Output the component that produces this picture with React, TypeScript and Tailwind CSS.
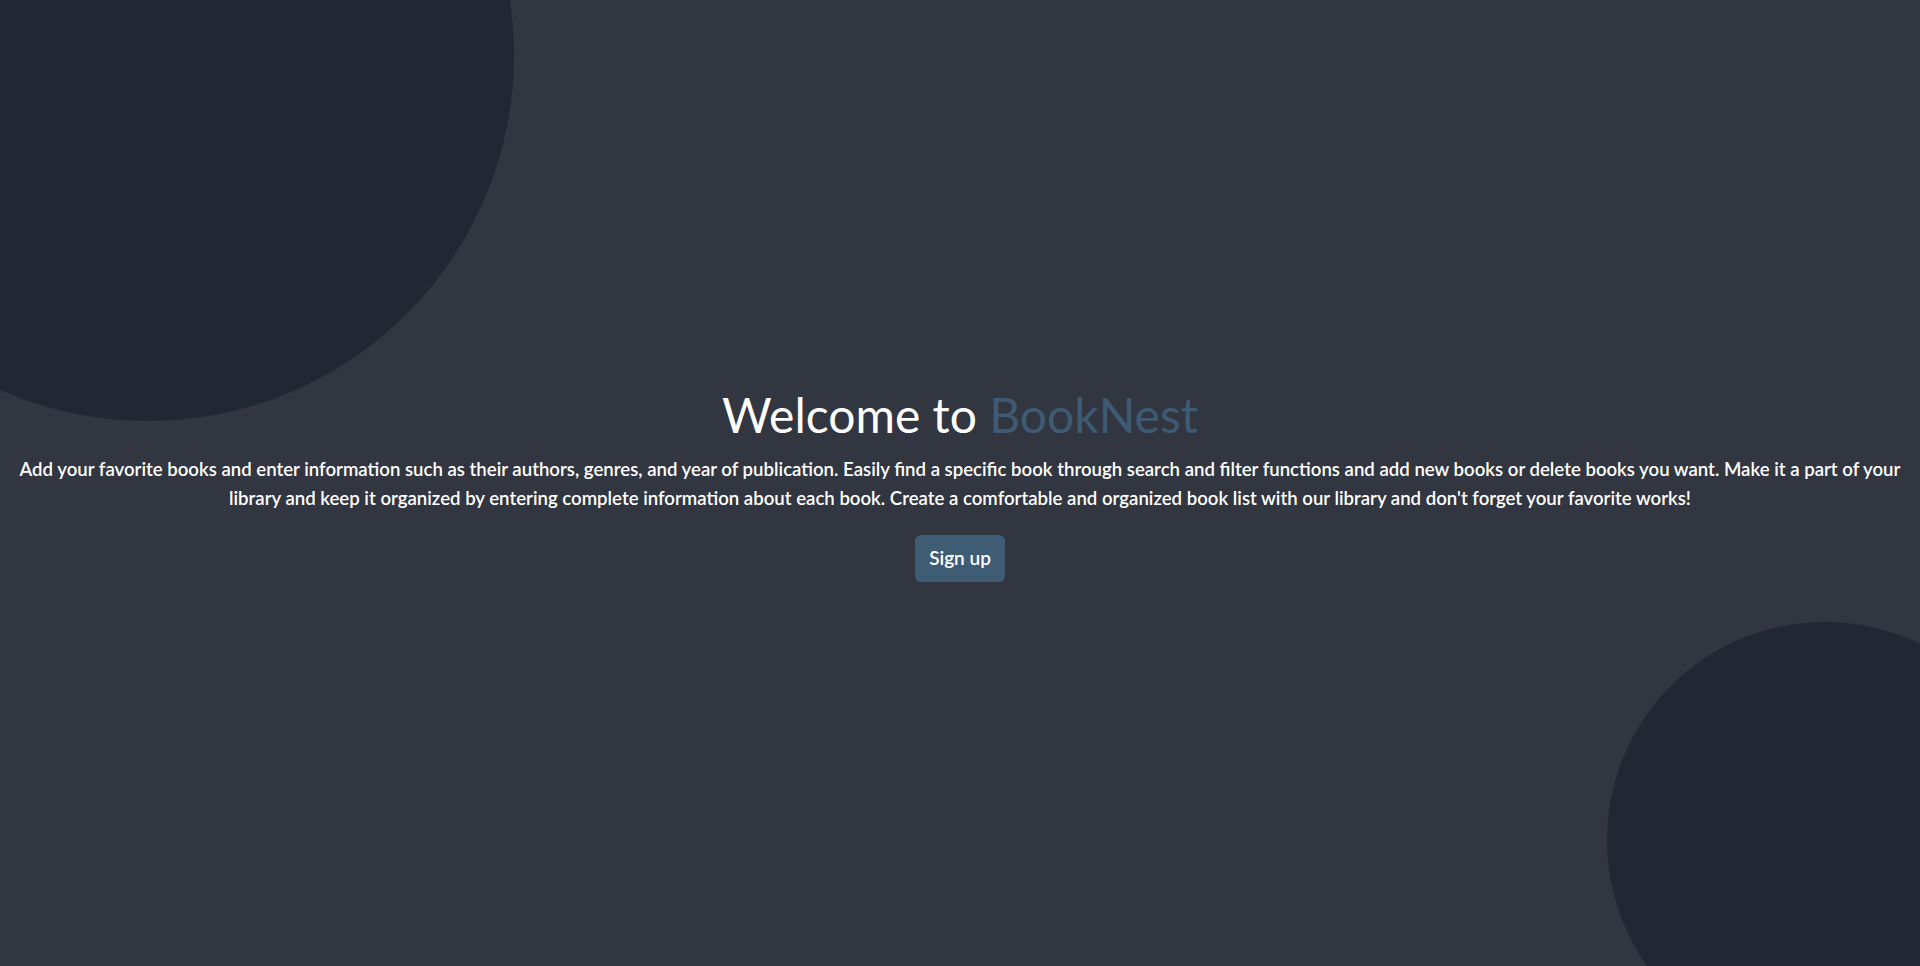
import React from 'react';

const App: React.FC = () => {
  return (
    <div className="relative min-h-screen h-[966px] w-full overflow-hidden bg-[#323640] font-['Lato','Open_Sans',sans-serif]">
      {/* decorative background circles */}
      <div className="absolute -left-[218px] -top-[311px] h-[732px] w-[732px] rounded-full bg-[#222833]" />
      <div className="absolute left-[1607px] top-[622px] h-[436px] w-[436px] rounded-full bg-[#222833]" />

      <div className="relative flex h-full flex-col items-center justify-center px-2 text-center">
        <h1 className="text-[48px] leading-[60px] text-white">
          Welcome to <span className="text-[#3e5b73]">BookNest</span>
        </h1>
        <p className="mt-[10px] text-[18.6px] font-semibold leading-[29px] text-white">
          <span className="block whitespace-nowrap">
            Add your favorite books and enter information such as their authors, genres, and year of publication. Easily find a specific book through search and filter functions and add new books or delete books you want. Make it a part of your
          </span>
          <span className="block whitespace-nowrap">
            library and keep it organized by entering complete information about each book. Create a comfortable and organized book list with our library and don't forget your favorite works!
          </span>
        </p>
        <button className="mt-[22px] h-[47px] w-[90px] rounded-md bg-[#3e5c74] text-[19px] font-semibold text-white">
          Sign up
        </button>
      </div>
    </div>
  );
};

export default App;
